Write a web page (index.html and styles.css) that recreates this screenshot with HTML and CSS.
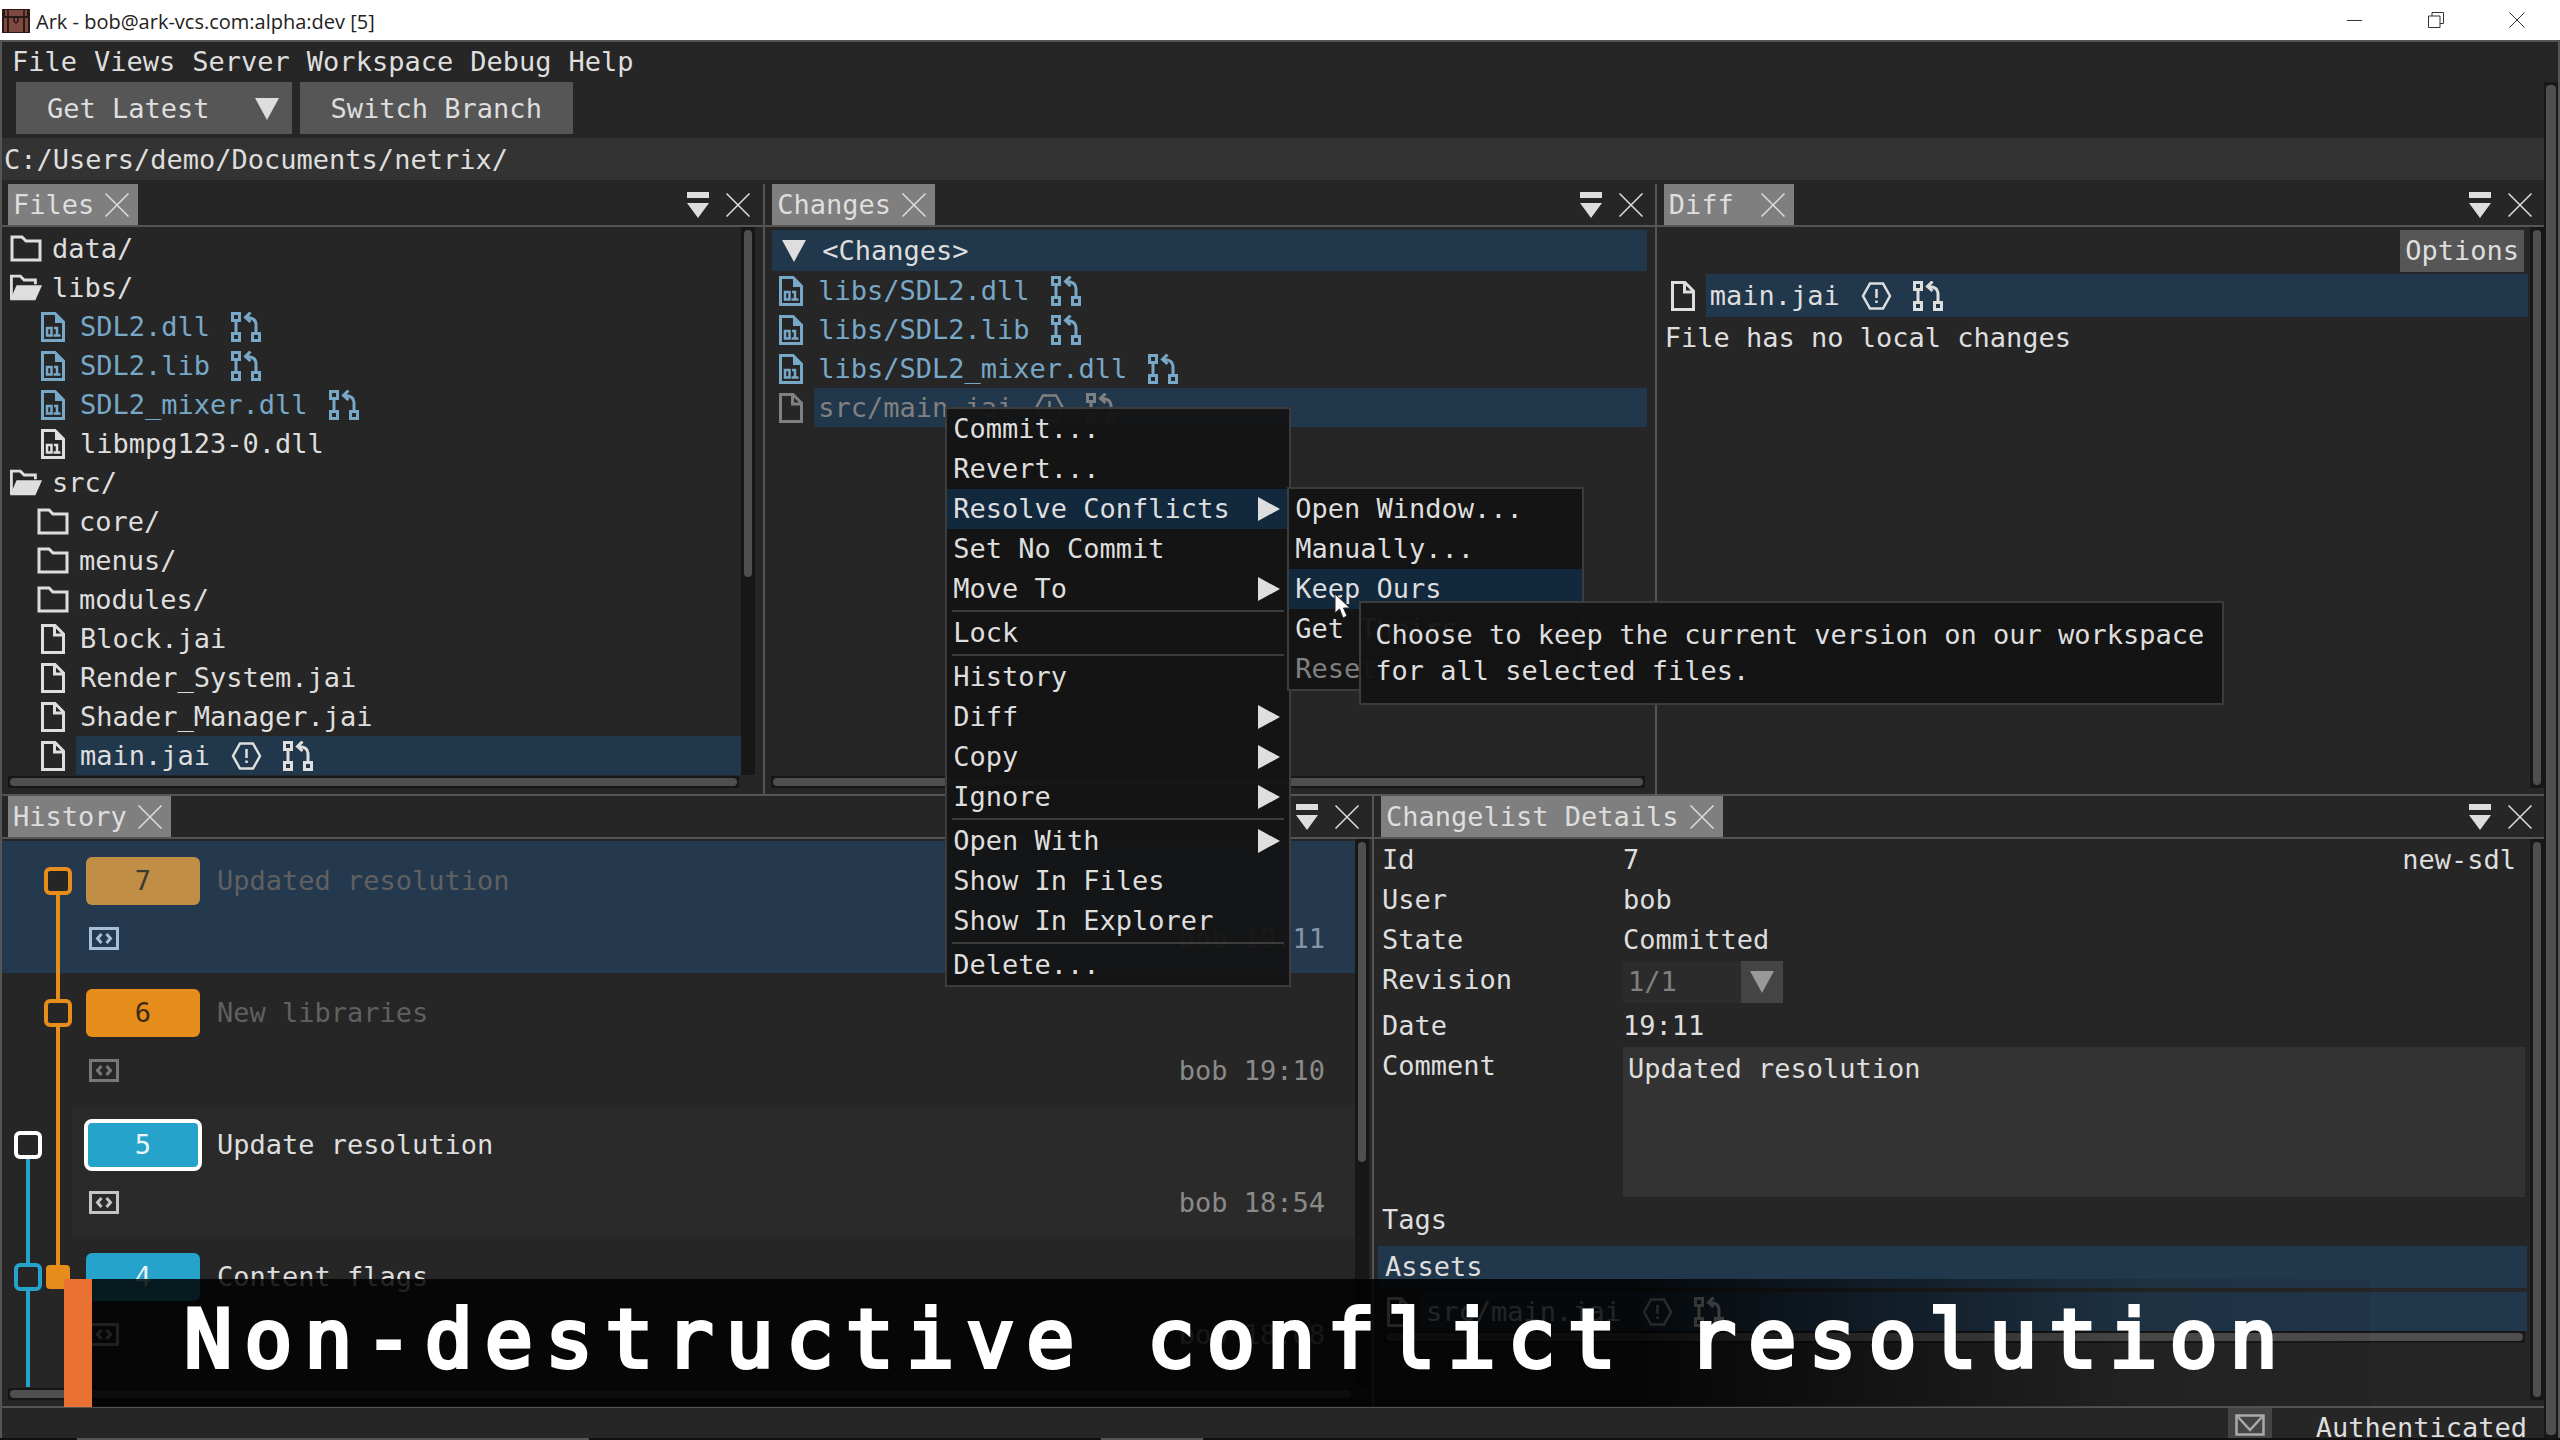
FILE: index.html
```html
<!doctype html>
<html lang="en">
  <head>
    <meta charset="utf-8">
    <title>Ark - bob@ark-vcs.com:alpha:dev [5]</title>
    <meta name="viewport" content="width=device-width">
    <link rel="stylesheet" href="styles.css">
  </head>
  <body>
    <!-- shared icons -->
    <svg class="sprite" aria-hidden="true">
      <symbol id="i-x" viewBox="0 0 24 24"><path d="M0.5 0.5L23.5 23.5M23.5 0.5L0.5 23.5" fill="none" stroke="currentColor" stroke-width="1.5"/></symbol>
      <symbol id="i-dock" viewBox="0 0 22 26"><path d="M0 0H22V6H0ZM0 11H22L11 26Z" fill="currentColor"/></symbol>
      <symbol id="i-down" viewBox="0 0 24 22"><path d="M0 0H24L12 22Z" fill="currentColor"/></symbol>
      <symbol id="i-right" viewBox="0 0 22 24"><path d="M0 0L22 12L0 24Z" fill="currentColor"/></symbol>
      <symbol id="i-folder" viewBox="0 0 32 27"><path d="M2 2H12L16 6H30V25H2Z" fill="none" stroke="currentColor" stroke-width="3"/></symbol>
      <symbol id="i-open" viewBox="0 0 34 27"><path d="M1.5 26V1.5H11L15 5.5H27V10" fill="none" stroke="currentColor" stroke-width="3"/><path d="M7 11H34L27 27H0Z" fill="currentColor"/></symbol>
      <symbol id="i-file" viewBox="0 0 24 30"><path d="M1.5 1.5H14L22.5 10V28.5H1.5ZM13.5 1.5V11H22.5" fill="none" stroke="currentColor" stroke-width="3"/></symbol>
      <symbol id="i-bin" viewBox="0 0 24 30"><path d="M1.5 1.5H14L22.5 10V28.5H1.5Z" fill="none" stroke="currentColor" stroke-width="3"/><path d="M14 0L24 10V11H14Z" fill="currentColor"/><path d="M6 16H10.5V23.5H6ZM13 16H16V23.5M12.5 23.5H19.5" fill="none" stroke="currentColor" stroke-width="2.5"/></symbol>
      <symbol id="i-merge" viewBox="0 0 30 30"><path d="M1.5 1.5H8.5V8.5H1.5ZM1.5 21.5H8.5V28.5H1.5ZM21.5 21.5H28.5V28.5H21.5ZM5 8.5V21.5M25 21.5V12Q24.5 5.5 15 5.5M19.5 0.5L14.5 5.5L19.5 10" fill="none" stroke="currentColor" stroke-width="3"/></symbol>
      <symbol id="i-hex" viewBox="0 0 31 28"><path d="M9 1.5H22L29 14L22 26.5H9L2 14Z" fill="none" stroke="currentColor" stroke-width="2.5"/><path d="M15.5 7V16M15.5 18.5V21" stroke="currentColor" stroke-width="2.5"/></symbol>
      <symbol id="i-code" viewBox="0 0 30 23"><path d="M1.5 1.5H28.5V21.5H1.5ZM12.5 7L8.5 11.5L12.5 16M17.5 7L21.5 11.5L17.5 16" fill="none" stroke="currentColor" stroke-width="3"/></symbol>
    </svg>

    <header class="titlebar">
      <svg class="logo" viewBox="0 0 28 25" aria-hidden="true">
        <path d="M0 1H28V25H0Z" fill="#2a1815"/>
        <path d="M3 2H25V8H3ZM7 10H21V24H7ZM2 10H5V24H2ZM23 10H26V24H23Z" fill="#7c4a40"/>
        <path d="M12 8V13Q14 17 16 13V8M6 1V25M22 1V25" fill="none" stroke="#2a1815" stroke-width="1.5"/>
      </svg>
      <h1>Ark - bob@ark-vcs.com:alpha:dev [5]</h1>
      <div class="window-buttons">
        <button type="button" title="Minimize"><svg viewBox="0 0 16 16"><path d="M0 8.5H15"/></svg></button>
        <button type="button" title="Restore"><svg viewBox="0 0 16 16"><path d="M4 4V0.5H15.5V11.5H12M0.5 4H12V15.5H0.5Z"/></svg></button>
        <button type="button" title="Close"><svg viewBox="0 0 16 16"><path d="M0.5 0.5L15.5 15.5M15.5 0.5L0.5 15.5"/></svg></button>
      </div>
    </header>

    <div class="window">
      <nav class="menubar">
        <button type="button">File</button>
        <button type="button">Views</button>
        <button type="button">Server</button>
        <button type="button">Workspace</button>
        <button type="button">Debug</button>
        <button type="button">Help</button>
      </nav>

      <div class="below-menu">
        <main>
          <div class="toolbar">
            <button type="button" class="latest">Get Latest <svg class="down"><use href="#i-down"/></svg></button>
            <button type="button">Switch Branch</button>
          </div>
          <div class="path">C:/Users/demo/Documents/netrix/</div>

          <div class="dock top">
            <section class="panel files">
              <div class="tabs">
                <h2 class="tab">Files <button type="button" title="Close tab"><svg class="x"><use href="#i-x"/></svg></button></h2>
                <button type="button" title="Dock menu"><svg class="dock-icon"><use href="#i-dock"/></svg></button>
                <button type="button" title="Close"><svg class="x"><use href="#i-x"/></svg></button>
              </div>
              <div class="scroll">
                <ul class="list tree">
                  <li><svg class="folder"><use href="#i-folder"/></svg><span>data/</span></li>
                  <li><svg class="folder"><use href="#i-open"/></svg><span>libs/</span></li>
                  <li class="child changed"><svg class="file"><use href="#i-bin"/></svg><span>SDL2.dll<svg class="merge"><use href="#i-merge"/></svg></span></li>
                  <li class="child changed"><svg class="file"><use href="#i-bin"/></svg><span>SDL2.lib<svg class="merge"><use href="#i-merge"/></svg></span></li>
                  <li class="child changed"><svg class="file"><use href="#i-bin"/></svg><span>SDL2_mixer.dll<svg class="merge"><use href="#i-merge"/></svg></span></li>
                  <li class="child"><svg class="file"><use href="#i-bin"/></svg><span>libmpg123-0.dll</span></li>
                  <li><svg class="folder"><use href="#i-open"/></svg><span>src/</span></li>
                  <li class="child"><svg class="folder"><use href="#i-folder"/></svg><span>core/</span></li>
                  <li class="child"><svg class="folder"><use href="#i-folder"/></svg><span>menus/</span></li>
                  <li class="child"><svg class="folder"><use href="#i-folder"/></svg><span>modules/</span></li>
                  <li class="child"><svg class="file"><use href="#i-file"/></svg><span>Block.jai</span></li>
                  <li class="child"><svg class="file"><use href="#i-file"/></svg><span>Render_System.jai</span></li>
                  <li class="child"><svg class="file"><use href="#i-file"/></svg><span>Shader_Manager.jai</span></li>
                  <li class="child selected"><svg class="file"><use href="#i-file"/></svg><span>main.jai<svg class="hex"><use href="#i-hex"/></svg><svg class="merge"><use href="#i-merge"/></svg></span></li>
                </ul>
                <div class="vbar"><i class="thumb-files"></i></div>
                <div class="hbar"><i></i></div>
              </div>
            </section>

            <section class="panel changes">
              <div class="tabs">
                <h2 class="tab">Changes <button type="button" title="Close tab"><svg class="x"><use href="#i-x"/></svg></button></h2>
                <button type="button" title="Dock menu"><svg class="dock-icon"><use href="#i-dock"/></svg></button>
                <button type="button" title="Close"><svg class="x"><use href="#i-x"/></svg></button>
              </div>
              <div class="scroll no-vbar">
                <div class="list">
                  <h3 class="group"><svg class="down"><use href="#i-down"/></svg>&lt;Changes&gt;</h3>
                  <ul>
                    <li class="changed"><svg class="file"><use href="#i-bin"/></svg><span>libs/SDL2.dll<svg class="merge"><use href="#i-merge"/></svg></span></li>
                    <li class="changed"><svg class="file"><use href="#i-bin"/></svg><span>libs/SDL2.lib<svg class="merge"><use href="#i-merge"/></svg></span></li>
                    <li class="changed"><svg class="file"><use href="#i-bin"/></svg><span>libs/SDL2_mixer.dll<svg class="merge"><use href="#i-merge"/></svg></span></li>
                    <li class="selected dim"><svg class="file"><use href="#i-file"/></svg><span>src/main.jai<svg class="hex"><use href="#i-hex"/></svg><svg class="merge"><use href="#i-merge"/></svg></span></li>
                  </ul>
                </div>
                <div class="hbar"><i></i></div>
              </div>

              <div class="menu context">
                <button type="button">Commit...</button>
                <button type="button">Revert...</button>
                <button type="button" class="active">Resolve Conflicts<svg class="right"><use href="#i-right"/></svg></button>
                <button type="button">Set No Commit</button>
                <button type="button">Move To<svg class="right"><use href="#i-right"/></svg></button>
                <hr>
                <button type="button">Lock</button>
                <hr>
                <button type="button">History</button>
                <button type="button">Diff<svg class="right"><use href="#i-right"/></svg></button>
                <button type="button">Copy<svg class="right"><use href="#i-right"/></svg></button>
                <button type="button">Ignore<svg class="right"><use href="#i-right"/></svg></button>
                <hr>
                <button type="button">Open With<svg class="right"><use href="#i-right"/></svg></button>
                <button type="button">Show In Files</button>
                <button type="button">Show In Explorer</button>
                <hr>
                <button type="button">Delete...</button>

                <div class="menu submenu">
                  <button type="button">Open Window...</button>
                  <button type="button">Manually...</button>
                  <button type="button" class="active">Keep Ours</button>
                  <button type="button">Get Theirs</button>
                  <button type="button" disabled>Reset</button>
                  <div class="tooltip" role="tooltip">Choose to keep the current version on our workspace<br>for all selected files.</div>
                  <svg class="cursor" viewBox="0 0 18 26" aria-hidden="true"><path d="M1 1V20L5.5 16L9 25L13 23L9.5 15H16Z" fill="#fff" stroke="#222"/></svg>
                </div>
              </div>
            </section>

            <section class="panel diff">
              <div class="tabs">
                <h2 class="tab">Diff <button type="button" title="Close tab"><svg class="x"><use href="#i-x"/></svg></button></h2>
                <button type="button" title="Dock menu"><svg class="dock-icon"><use href="#i-dock"/></svg></button>
                <button type="button" title="Close"><svg class="x"><use href="#i-x"/></svg></button>
              </div>
              <div class="scroll no-hbar">
                <div class="list">
                  <div class="options"><button type="button">Options</button></div>
                  <ul>
                    <li class="selected"><svg class="file"><use href="#i-file"/></svg><span>main.jai<svg class="hex"><use href="#i-hex"/></svg><svg class="merge"><use href="#i-merge"/></svg></span></li>
                  </ul>
                  <p>File has no local changes</p>
                </div>
                <div class="vbar"><i></i></div>
              </div>
            </section>
          </div>

          <div class="dock bottom">
            <section class="panel history">
              <div class="tabs">
                <h2 class="tab">History <button type="button" title="Close tab"><svg class="x"><use href="#i-x"/></svg></button></h2>
                <button type="button" title="Dock menu"><svg class="dock-icon"><use href="#i-dock"/></svg></button>
                <button type="button" title="Close"><svg class="x"><use href="#i-x"/></svg></button>
              </div>
              <div class="scroll">
                <ol class="list commits">
                  <li class="commit current">
                    <svg class="graph" viewBox="0 0 70 132"><path class="feature" d="M56 40V132"/><rect class="feature" x="44" y="28" width="24" height="24" rx="4"/></svg>
                    <b class="badge feature">7</b><span class="message">Updated resolution</span>
                    <svg class="code"><use href="#i-code"/></svg><span class="when">bob 19:11</span>
                  </li>
                  <li class="commit">
                    <svg class="graph" viewBox="0 0 70 132"><path class="feature" d="M56 0V132"/><rect class="feature" x="44" y="28" width="24" height="24" rx="4"/></svg>
                    <b class="badge feature">6</b><span class="message">New libraries</span>
                    <svg class="code"><use href="#i-code"/></svg><span class="when">bob 19:10</span>
                  </li>
                  <li class="commit merged head">
                    <svg class="graph" viewBox="0 0 70 132"><path class="feature" d="M56 0V132"/><path class="main" d="M26 40V132"/><rect class="here" x="14" y="28" width="24" height="24" rx="4"/></svg>
                    <b class="badge main">5</b><span class="message">Update resolution</span>
                    <svg class="code"><use href="#i-code"/></svg><span class="when">bob 18:54</span>
                  </li>
                  <li class="commit merged">
                    <svg class="graph" viewBox="0 0 70 132"><path class="feature" d="M56 0V40"/><rect class="feature solid" x="46" y="30" width="20" height="20" rx="2"/><path class="main" d="M26 0V150"/><rect class="main" x="14" y="28" width="24" height="24" rx="4"/></svg>
                    <b class="badge main">4</b><span class="message">Content flags</span>
                    <svg class="code"><use href="#i-code"/></svg><span class="when">bob 18:08</span>
                  </li>
                </ol>
                <div class="vbar"><i class="thumb-history"></i></div>
                <div class="hbar"><i></i></div>
              </div>
            </section>

            <section class="panel details">
              <div class="tabs">
                <h2 class="tab">Changelist Details <button type="button" title="Close tab"><svg class="x"><use href="#i-x"/></svg></button></h2>
                <button type="button" title="Dock menu"><svg class="dock-icon"><use href="#i-dock"/></svg></button>
                <button type="button" title="Close"><svg class="x"><use href="#i-x"/></svg></button>
              </div>
              <div class="scroll no-hbar">
                <div class="list">
                  <div class="fields">
                    <span>Id</span><div class="id"><span>7</span><span>new-sdl</span></div>
                    <span>User</span><span>bob</span>
                    <span>State</span><span>Committed</span>
                    <label for="revision">Revision</label>
                    <div class="combo">
                      <select id="revision" disabled><option>1/1</option></select>
                      <svg class="down"><use href="#i-down"/></svg>
                    </div>
                    <span>Date</span><span>19:11</span>
                    <label for="comment">Comment</label>
                    <textarea id="comment" readonly>Updated resolution</textarea>
                    <span>Tags</span>
                  </div>
                  <h3 class="assets">Assets</h3>
                  <ul>
                    <li class="selected"><svg class="file"><use href="#i-file"/></svg><span>src/main.jai<svg class="hex"><use href="#i-hex"/></svg><svg class="merge"><use href="#i-merge"/></svg></span></li>
                  </ul>
                  <div class="hbar"><i></i></div>
                </div>
                <div class="vbar"><i></i></div>
              </div>
            </section>
          </div>

          <footer>
            <button type="button" title="Messages"><svg viewBox="0 0 30 22"><path d="M1.5 1.5H28.5V20.5H1.5ZM3 3L15 16L27 3" fill="none" stroke="currentColor" stroke-width="2.5"/></svg></button>
            <span>Authenticated</span>
          </footer>
        </main>
        <div class="vbar outer"><i></i></div>
      </div>
    </div>
    <div class="taskbar"></div>

    <div class="caption">Non-destructive conflict resolution</div>
  </body>
</html>
```

FILE: styles.css
```css
:root {
  color-scheme: dark;
  --bg: #262626;
  --text: #dedede;
  --line: #555555;
  --blue: #21374b;
  --feature: #e68d1c;
  --main: #25a3ca;
  --changed: #78a8c8;
}
* {
  box-sizing: border-box;
}
body {
  position: relative;
  display: flex;
  flex-direction: column;
  height: 100vh;
  margin: 0;
  overflow: hidden;
  background: var(--bg);
  color: var(--text);
  font: 27px/40px "DejaVu Sans Mono", monospace;
}
h1, h2, h3, p, ul, ol {
  margin: 0;
  padding: 0;
  font: inherit;
  list-style: none;
}
button, select, textarea {
  margin: 0;
  padding: 0;
  border: none;
  border-radius: 0;
  background: none;
  color: inherit;
  font: inherit;
}
svg {
  display: block;
  flex: none;
}
.sprite {
  position: absolute;
  width: 0;
  height: 0;
}

/* icon sizes */
.x { width: 24px; height: 24px; }
.dock-icon { width: 22px; height: 26px; }
.down { width: 24px; height: 22px; }
.right { width: 22px; height: 24px; }
.folder { width: 32px; height: 27px; }
.file { width: 24px; height: 30px; }
.merge { width: 30px; height: 30px; }
.hex { width: 31px; height: 28px; }
.code { width: 30px; height: 23px; }

/* window frame */
.titlebar {
  display: flex;
  flex: none;
  align-items: center;
  gap: 6px;
  height: 40px;
  padding: 0 20px 0 2px;
  background: #fff;
  color: #222;
}
.titlebar h1 {
  flex: 1;
  padding-top: 4px;
  font: 20px/28px "Open Sans", sans-serif;
}
.logo {
  width: 28px;
  height: 25px;
}
.window-buttons {
  display: flex;
}
.window-buttons button {
  width: 81px;
  display: flex;
  justify-content: center;
}
.window-buttons button:last-child {
  width: 46px;
  margin-left: 18px;
}
.window-buttons svg {
  width: 16px;
  height: 16px;
  fill: none;
  stroke: #333;
}
.window {
  display: flex;
  flex: 1;
  flex-direction: column;
  min-height: 0;
  border: 2px solid var(--line);
  border-bottom: none;
}
.taskbar {
  flex: none;
  height: 2px;
  background: linear-gradient(90deg, #111 3%, #555 3%, #555 23%, #111 23%, #111 43%, #555 43%, #555 47%, #111 47%);
}
.menubar {
  display: flex;
  gap: 17px;
  padding: 0 10px;
}
.below-menu {
  display: flex;
  flex: 1;
  min-height: 0;
}
main {
  display: flex;
  flex: 1;
  flex-direction: column;
  min-width: 0;
}
.toolbar {
  display: flex;
  gap: 8px;
  padding: 0 14px 4px;
}
.toolbar button {
  display: flex;
  align-items: center;
  gap: 45px;
  height: 52px;
  padding: 1px 31px 0;
  background: #565656;
}
.toolbar .latest {
  padding-right: 13px;
}
.path {
  padding: 2px 2px 0;
  background: #333;
}

/* docked panels */
.dock {
  display: grid;
  flex: 1;
  min-height: 0;
  padding-top: 4px;
}
.top {
  grid-template-columns: 761fr 891fr 889fr;
}
.bottom {
  grid-template-columns: 1370fr 1172fr;
  border-top: 2px solid var(--line);
  padding-top: 0;
}
.panel {
  position: relative;
  display: flex;
  flex-direction: column;
  min-width: 0;
  min-height: 0;
}
.panel + .panel {
  border-left: 2px solid var(--line);
}
.tabs {
  display: flex;
  flex: none;
  align-items: center;
  gap: 17px;
  height: 43px;
  padding: 0 13px 0 6px;
  border-bottom: 2px solid var(--line);
}
.changes .tabs, .diff .tabs, .details .tabs {
  padding-right: 12px;
  padding-left: 7px;
}
.tab {
  display: flex;
  align-items: center;
  justify-content: space-between;
  gap: 11px;
  min-width: 130px;
  height: 41px;
  margin-right: auto;
  padding: 0 9px 0 5px;
  background: #7f7f7f;
}
.scroll {
  display: grid;
  flex: 1;
  grid-template-columns: 1fr 22px;
  grid-template-rows: 1fr 19px;
  min-height: 0;
}
.history .scroll {
  grid-template-columns: 1fr 17px;
}
.no-vbar {
  grid-template-columns: 1fr 8px;
}
.no-hbar {
  grid-template-columns: 1fr 16px;
  grid-template-rows: 1fr 6px;
}
.list {
  min-width: 0;
  padding-top: 2px;
  overflow: hidden;
}
.vbar {
  grid-column: 2;
  grid-row: 1;
  width: 14px;
  padding: 3px;
  background: #171717;
}
.hbar {
  grid-column: 1;
  grid-row: 2;
  height: 12px;
  margin: 1px 2px 0 6px;
  padding: 2px;
  background: #171717;
}
.vbar i, .hbar i {
  display: block;
  height: 100%;
  border-radius: 4px;
  background: #4f4f4f;
}
.vbar .thumb-files {
  height: 64%;
}
.vbar .thumb-history {
  height: 59%;
}
.outer {
  flex: none;
  padding: 3px 2px;
}

/* file rows */
li:not(.commit) {
  display: flex;
  align-items: center;
  height: 39px;
  padding-left: 14px;
}
li > span {
  display: flex;
  flex: 1;
  align-items: center;
  gap: 21px;
  height: 100%;
  padding-left: 4px;
}
li > .file + span {
  margin-left: 11px;
}
.tree li {
  padding-left: 8px;
}
.tree li > .folder + span {
  margin-left: 6px;
}
.tree .child {
  padding-left: 35px;
}
.tree .child > .file {
  margin-left: 4px;
}
.changed {
  color: var(--changed);
}
.selected > span {
  background: var(--blue);
}
.dim {
  color: #808080;
}

/* changes */
.changes .list {
  padding-top: 3px;
}
.group {
  display: flex;
  align-items: center;
  gap: 16px;
  height: 41px;
  margin-left: 7px;
  padding-left: 10px;
  background: var(--blue);
}

/* diff */
.diff .list {
  padding-top: 3px;
}
.options {
  display: flex;
  justify-content: flex-end;
  margin-right: 4px;
}
.options button {
  height: 42px;
  padding: 0 5px;
  background: #565656;
}
.diff li {
  height: 43px;
  margin-top: 2px;
}
.diff p {
  padding-top: 1px;
  padding-left: 8px;
}

/* menus */
.menu {
  position: absolute;
  z-index: 2;
  border: 2px solid #3c3c3c;
  background: rgba(20, 20, 20, 0.96);
}
.context {
  top: 223px;
  left: 180px;
  width: 346px;
}
.submenu {
  top: 78px;
  left: 340px;
  width: 297px;
}
.menu > button {
  display: flex;
  align-items: center;
  justify-content: space-between;
  width: 100%;
  height: 40px;
  padding: 0 9px 0 6px;
}
.menu > .active {
  background: #12283d;
}
.menu > button:disabled {
  color: #808080;
}
.menu hr {
  height: 2px;
  margin: 1px 5px;
  border: none;
  background: #3c3c3c;
}
.tooltip {
  position: absolute;
  top: 112px;
  left: 70px;
  padding: 14px 18px 14px 14px;
  border: 2px solid #3c3c3c;
  background: rgba(20, 20, 20, 0.96);
  line-height: 36px;
  white-space: nowrap;
}
.cursor {
  position: absolute;
  top: 104px;
  left: 45px;
  width: 18px;
  height: 26px;
}

/* history */
.commit {
  display: grid;
  grid-template-columns: 70px 130px 1fr auto;
  grid-template-rows: 80px 52px;
  align-items: center;
  height: 132px;
  color: #a0a0a0;
}
.commit .graph {
  grid-row: 1 / 3;
  width: 70px;
  height: 132px;
  overflow: visible;
  fill: none;
  stroke-width: 4px;
}
.graph rect {
  fill: var(--bg);
}
.graph .feature {
  stroke: var(--feature);
}
.graph .main {
  stroke: var(--main);
}
.graph .here {
  stroke: #fff;
}
.graph .solid {
  fill: var(--feature);
}
.badge {
  height: 48px;
  margin-left: 14px;
  margin-right: 2px;
  border-radius: 6px;
  color: #3a2a14;
  font-weight: normal;
  line-height: 48px;
  text-align: center;
}
.badge.feature {
  background: var(--feature);
}
.badge.main {
  background: var(--main);
  color: #e8f4f8;
}
.current {
  background: #24394d;
}
.current .badge {
  background: #c08f45;
  color: #3a3a34;
}
.head {
  background: linear-gradient(90deg, transparent 70px, #2a2a2a 70px);
}
.head .badge {
  outline: 4px solid #fff;
  outline-offset: -2px;
}
.commit > .message {
  grid-column: 3 / 5;
  padding-left: 15px;
  color: #606060;
}
.merged > .message {
  color: var(--text);
}
.commit .code {
  grid-column: 2;
  margin: 0 0 18px 17px;
  color: #777;
}
.current .code {
  color: #a8c0d6;
}
.merged .code {
  color: #c4c4c4;
}
.commit > .when {
  grid-column: 4;
  height: 36px;
  margin-bottom: 16px;
  padding-right: 30px;
  color: #8a8a8a;
}
.current > .when {
  color: #8496a6;
}

/* changelist details */
.details .list {
  padding: 1px 1px 0 4px;
}
.details .vbar, .diff .vbar {
  margin-left: 2px;
}
.fields {
  display: grid;
  grid-template-columns: 241px 1fr;
  margin-left: 4px;
  margin-right: 2px;
}
.id {
  display: flex;
  justify-content: space-between;
  padding-right: 9px;
}
.combo {
  position: relative;
  width: 160px;
  height: 42px;
  margin: 1px 0 3px;
  background: linear-gradient(90deg, #2b2b2b 118px, #444 118px);
  color: #999;
}
.combo select {
  width: 100%;
  height: 42px;
  padding: 0 5px;
  appearance: none;
  color: #808080;
  opacity: 1;
}
.combo .down {
  position: absolute;
  top: 10px;
  right: 9px;
}
.fields textarea {
  height: 150px;
  margin-top: 1px;
  margin-bottom: 3px;
  padding: 2px 5px;
  background: #333;
  resize: none;
  outline: none;
}
.assets {
  height: 42px;
  margin-top: 6px;
  padding-top: 1px;
  padding-left: 7px;
  background: var(--blue);
}
.details ul {
  margin-top: 4px;
}
.details li {
  padding-left: 9px;
}
.details .hbar {
  margin-top: 0;
}

footer {
  display: flex;
  flex: none;
  align-items: center;
  justify-content: flex-end;
  gap: 44px;
  height: 32px;
  padding-right: 17px;
  border-top: 2px solid var(--line);
}
footer button {
  display: flex;
  justify-content: center;
  width: 44px;
  padding: 6px 0 2px;
  background: #444;
  color: #aaa;
}
footer svg {
  width: 30px;
  height: 22px;
}
footer span {
  padding-top: 10px;
}

/* caption over the recording */
.caption {
  position: absolute;
  right: 190px;
  bottom: 33px;
  left: 64px;
  z-index: 3;
  height: 128px;
  padding-left: 92px;
  border-left: 28px solid #e97132;
  background: linear-gradient(90deg, rgba(0, 0, 0, 0.84) 68%, rgba(0, 0, 0, 0.1) 90%, rgba(0, 0, 0, 0.05));
  color: #fff;
  font-size: 80px;
  line-height: 122px;
  letter-spacing: 12px;
  white-space: nowrap;
  -webkit-text-stroke: 4px #fff;
}
```
